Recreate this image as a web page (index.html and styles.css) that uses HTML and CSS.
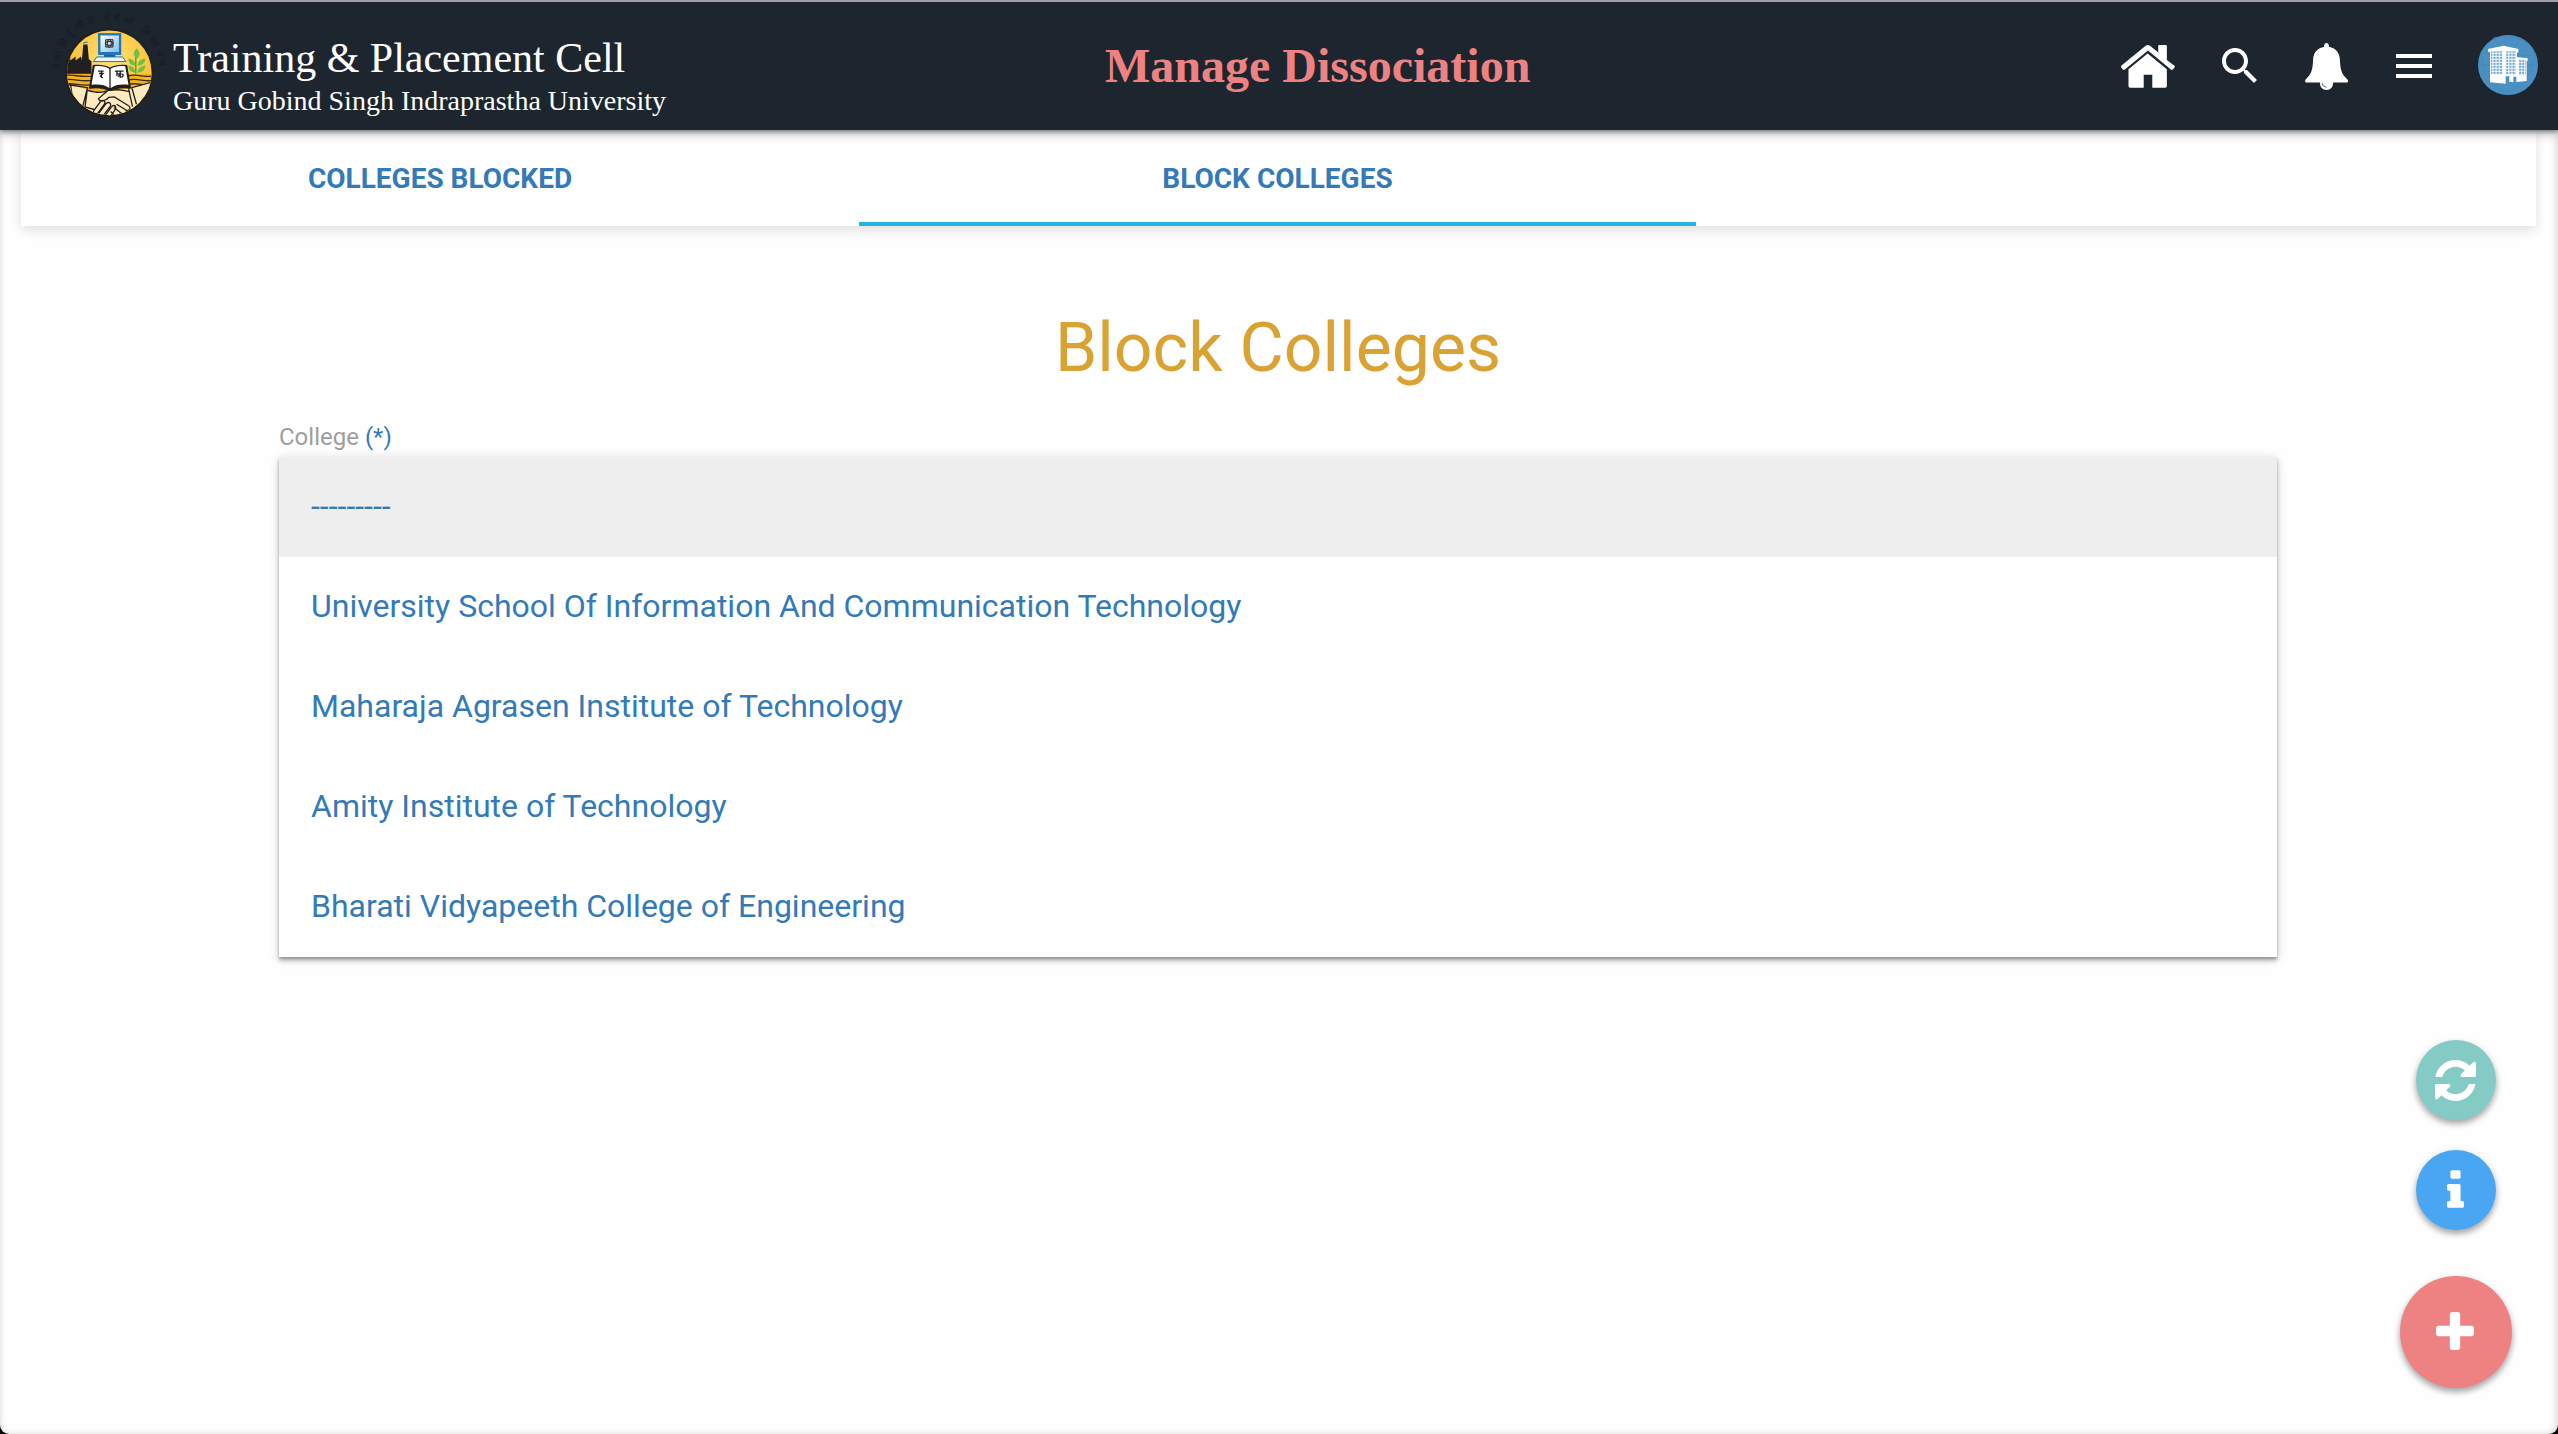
FILE: index.html
```html
<!DOCTYPE html>
<html lang="en">
<head>
<meta charset="utf-8">
<title>Manage Dissociation</title>
<link rel="stylesheet" href="styles.css">
</head>
<body>
<header class="navbar">
  <a class="brand">
    <svg class="brand-logo" viewBox="0 0 360 360" aria-hidden="true">
      <defs>
        <path id="motto-arc" d="M28 178A150 150 0 0 1 328 178"/>
        <clipPath id="seal"><circle cx="178" cy="187" r="128"/></clipPath>
        <radialGradient id="sun" cx="50%" cy="35%" r="60%">
          <stop offset="0" stop-color="#ffe27a"/>
          <stop offset="1" stop-color="#fbb924"/>
        </radialGradient>
        <linearGradient id="screen" x1="0" y1="0" x2="1" y2="1">
          <stop offset="0" stop-color="#fff"/>
          <stop offset="1" stop-color="#7cc0ea"/>
        </linearGradient>
      </defs>
      <text class="motto"><textPath href="#motto-arc" textLength="460">ज्योतिर्वृणीत तमसो विजानन</textPath></text>
      <circle cx="178" cy="187" r="135" fill="#231f20"/>
      <g clip-path="url(#seal)">
        <rect x="40" y="50" width="280" height="280" fill="url(#sun)"/>
        <path d="M40 150l20-12v12l16-12v12l16-12 3 10 4-47h13l4 45 8 6v42H40z" fill="#231f20"/>
        <path d="M100 98c2-5 8-2 12-4" fill="none" stroke="#2b8f9c" stroke-width="4"/>
        <rect x="40" y="190" width="280" height="60" fill="#f5b31f"/>
        <path d="M40 196c30-8 50 8 90 0M40 209c30-8 50 8 90 0M40 222c30-8 50 8 90 0M235 196c30-8 50 8 80 0M235 209c30-8 50 8 80 0M235 222c30-8 50 8 80 0" fill="none" stroke="#3c2c14" stroke-width="4"/>
        <path d="M258 190V135" stroke="#4a9c35" stroke-width="4"/>
        <path d="M261 113c-14 14-10 24 0 32 11-9 12-20 0-32zM257 166c-2-16-9-20-21-22 0 14 7 21 21 22zM263 166c2-16 11-20 24-22-1 14-9 21-24 22zM257 187c-2-16-9-20-21-22 0 14 7 21 21 22zM263 187c2-16 11-20 24-22-1 14-9 21-24 22z" fill="#72bf44"/>
        <path d="M40 218l55 14 40 14 40-4 42-2 105-30v130H40z" fill="#fdeabf"/>
        <path d="M48 222l64 10-14 55M60 218l8 55M112 232l-8 62M318 212l-72 20 14 50M236 234l12 55" fill="none" stroke="#231f20" stroke-width="4"/>
        <path d="M112 240c30 8 45 8 63 0l30-2 35 6M175 240l-30 25c4 12 22 8 32-4l16-1 42 26c12 8 2 20-9 12l-26-16M228 300c6 10-6 18-16 8l-20-16M210 310c2 10-8 14-16 6l-12-12M104 290l28 8M132 300l20-27c10-6 16 2 10 10l-19 26c-10 6-16-2-11-9M146 310l23-31c10-6 16 2 11 10l-20 27M166 316l20-28c10-6 14 4 9 11l-16 24" fill="none" stroke="#231f20" stroke-width="4"/>
      </g>
      <path d="M144 67h70v66h-70z" fill="#2274ba"/>
      <path d="M151 74h56v50h-56z" fill="url(#screen)"/>
      <g fill="none" stroke="#231f20" stroke-width="3"><ellipse cx="178" cy="98" rx="12" ry="6"/><ellipse cx="178" cy="98" rx="6" ry="12"/><path d="M167 87h22v22h-22z"/></g>
      <path d="M162 133h34v8h-34z" fill="#1b5f9e"/>
      <path d="M140 139h78l10 14h-98z" fill="#eaf5fc" stroke="#2274ba" stroke-width="3"/>
      <path d="M128 163l-12 72c30-4 45 0 64 8 19-8 34-12 64-8l-12-72c-22-2-38 0-52 8-14-8-30-10-52-8z" fill="#231f20"/>
      <path d="M134 167l-10 56c26-2 40 0 54 10V175c-12-8-26-10-44-8zM226 167l10 56c-26-2-40 0-54 10V175c12-8 26-10 44-8z" fill="#fff"/>
      <path d="M144 182h17M154 182v20M147 189h12l-8 8 7 6M195 182h26M201 183v14M211 183v20M202 191c9-4 8 7 2 7M214 190c9 0 6 12 0 8" fill="none" stroke="#231f20" stroke-width="4"/>
    </svg>
    <span class="brand-text">
      <span class="brand-name">Training &amp; Placement Cell</span>
      <span class="brand-org">Guru Gobind Singh Indraprastha University</span>
    </span>
  </a>
  <h1 class="page-name">Manage Dissociation</h1>
  <nav class="nav-icons">
    <svg class="icon-home" viewBox="93 135 162 130"><path d="M167 137q7-4 13 0l25 21v-20q0-3 3-3h20q3 0 3 3v42l23 18q2 2 0 5l-5 6q-3 3-6 0l-69-57-70 57q-3 3-6 0l-5-6q-2-3 0-5z"/><path d="M173 161l58 47v51q0 5-5 5h-39v-39h-26v39h-41q-5 0-5-5v-51z"/></svg>
    <svg class="icon-md" viewBox="0 0 24 24"><path d="M15.5 14h-.79l-.28-.27C15.41 12.59 16 11.11 16 9.5 16 5.91 13.09 3 9.500 3S3 5.910 3 9.500 5.910 16 9.500 16c1.610 0 3.090-.59 4.230-1.570l.27.28v.79l5 4.990L20.490 19l-4.990-5zm-6 0C7.010 14 5 11.990 5 9.500S7.010 5 9.500 5 14 7.010 14 9.500 11.990 14 9.500 14z"/></svg>
    <svg class="icon-bell" viewBox="647 127 128 140"><path d="M704 138v-4q1-7 7-7t7 7v4c20 4 32 16 33 40 1 32 7 44 21 56q6 6 1 11h-42q-1 22-20 22t-20-22h-42q-4-5 1-11c14-12 20-24 21-56 1-24 13-36 34-40z"/><path class="bell-glint" d="M697 246q2 12 14 13"/></svg>
    <svg class="icon-md icon-menu" viewBox="0 0 24 24"><path d="M3 18h18v-2H3v2zm0-5h18v-2H3v2zm0-7v2h18V6H3z"/></svg>
    <svg class="avatar" viewBox="1 11 180 180">
      <defs><pattern id="panes" width="9.500" height="9" patternUnits="userSpaceOnUse" x="37" y="58"><path d="M1 1h6.500v5H1z" fill="#4a90c2"/></pattern></defs>
      <circle cx="91" cy="101" r="90" fill="#4a90c2"/>
      <path d="M10 62L50 18l80 2 44 50-30 85-60 30-60-40zM50 18l34 60 46-58M10 62l74 16 90-8M24 145l60-67 60 77M1 101h180" fill="none" stroke="#4386b8" stroke-width="2"/>
      <path d="M31 53l47-10 44 10v10l-4 1v13l32 4v7l-3 1v60l-31 3v-16h-9v17l-4-1v-17H84v22l-47-4V62l-5 1z" fill="#fff"/>
      <path d="M40 60h34v69H40zM83 60h32v69H83zM123 86h22v46h-22z" fill="url(#panes)"/>
      <path d="M95 135h8v17l-8-1z" fill="#fff"/>
    </svg>
  </nav>
</header>

<main class="content">
  <ul class="tabs">
    <li class="tab">Colleges Blocked</li>
    <li class="tab tab-active">Block Colleges</li>
  </ul>

  <section class="panel">
    <h2 class="panel-title">Block Colleges</h2>
    <label class="field-label">College <span class="required">(*)</span></label>
    <ul class="dropdown">
      <li class="option option-selected">---------</li>
      <li class="option">University School Of Information And Communication Technology</li>
      <li class="option">Maharaja Agrasen Institute of Technology</li>
      <li class="option">Amity Institute of Technology</li>
      <li class="option">Bharati Vidyapeeth College of Engineering</li>
    </ul>
  </section>
</main>

<div class="actions">
  <button class="fab fab-refresh" aria-label="Refresh"><svg width="41" height="41" viewBox="0 0 1536 1536"><path d="M1511 928q0 5-1 7-64 268-268 434.500t-478 166.500q-146 0-282.500-55t-243.500-157l-129 129q-19 19-45 19t-45-19-19-45v-448q0-26 19-45t45-19h448q26 0 45 19t19 45-19 45l-137 137q71 66 161 102t187 36q134 0 250-65t186-179q11-17 53-117 8-23 30-23h192q13 0 22.500 9.500t9.500 22.500zm25-800v448q0 26-19 45t-45 19h-448q-26 0-45-19t-19-45 19-45l138-138q-148-137-349-137-134 0-250 65t-186 179q-11 17-53 117-8 23-30 23h-199q-13 0-22.500-9.500t-9.500-22.500v-7q65-268 270-434.500t480-166.500q146 0 284 55.500t245 156.500l130-129q19-19 45-19t45 19 19 45z"/></svg></button>
  <button class="fab fab-info" aria-label="Info"><svg width="17" height="38" viewBox="0 128 640 1408"><path d="M640 1344v128q0 26-19 45t-45 19h-512q-26 0-45-19t-19-45v-128q0-26 19-45t45-19h64v-384h-64q-26 0-45-19t-19-45v-128q0-26 19-45t45-19h384q26 0 45 19t19 45v576h64q26 0 45 19t19 45zm-128-1152v192q0 26-19 45t-45 19h-256q-26 0-45-19t-19-45v-192q0-26 19-45t45-19h256q26 0 45 19t19 45z"/></svg></button>
  <button class="fab fab-add" aria-label="Add"><svg width="38" height="38" viewBox="0 0 1408 1408"><path d="M1408 608v192q0 40-28 68t-68 28h-416v416q0 40-28 68t-68 28h-192q-40 0-68-28t-28-68v-416h-416q-40 0-68-28t-28-68v-192q0-40 28-68t68-28h416v-416q0-40 28-68t68-28h192q40 0 68 28t28 68v416h416q40 0 68 28t28 68z"/></svg></button>
</div>
</body>
</html>
```
FILE: styles.css
```css
* { box-sizing: border-box; }

html { background: #000; }

body {
  margin: 0;
  height: 1434px;
  overflow: hidden;
  display: flex;
  flex-direction: column;
  background: #fefefe;
  border-radius: 0 0 9px 9px;
  box-shadow: inset 3px 0 6px -3px rgba(0, 0, 0, .14), inset -3px 0 8px -2px rgba(0, 0, 0, .18);
  font-family: Roboto, sans-serif;
  color: #337ab7;
}

ul { margin: 0; padding: 0; list-style: none; }
h1, h2 { margin: 0; }
svg { display: block; }

/* Top bar */
.navbar {
  position: relative;
  z-index: 1;
  flex: none;
  height: 130px;
  border-top: 2px solid #a19ea4;
  background: #1d262f;
  box-shadow: 0 4px 10px rgba(0, 0, 0, .26), 0 2px 4px rgba(0, 0, 0, .36);
  display: grid;
  grid-template-columns: 1105px 1fr auto;
  align-items: center;
  padding-right: 20px;
  font-family: "Liberation Serif", serif;
}

.brand {
  display: flex;
  align-self: start;
  padding: 9px 0 0 50px;
  color: #fff;
}
.brand-logo { width: 120px; height: 119px; overflow: visible; }
.brand-text {
  display: flex;
  flex-direction: column;
  padding: 23px 0 0 3px;
  white-space: nowrap;
}
.brand-name { font-size: 42px; line-height: 48px; }
.brand-org { font-size: 28px; line-height: 37px; }
.motto {
  font: 32px "Noto Sans Devanagari", "Noto Sans", sans-serif;
  fill: #171a20;
}

.page-name {
  font-size: 48px;
  line-height: 56px;
  font-weight: 700;
  color: #ee8283;
  white-space: nowrap;
}

.nav-icons { display: flex; align-items: center; gap: 41px; fill: #fff; }
.icon-home { width: 54px; height: 43px; }
.icon-md { width: 48px; height: 48px; }
.icon-menu { margin: 0 -1px 0 1px; }
.icon-bell { width: 43px; height: 47px; }
.bell-glint { fill: none; stroke: #1d262f; stroke-width: 2; }
.avatar { width: 60px; height: 60px; margin-bottom: 3px; }

/* Tabs */
.content { padding: 0 22px 0 21px; }
.tabs {
  display: grid;
  grid-template-columns: 838px 837px 1fr;
  height: 96px;
  background: #fff;
  box-shadow: 0 4px 10px rgba(0, 0, 0, .09), 0 4px 16px rgba(0, 0, 0, .04);
}
.tab {
  font-size: 28px;
  line-height: 97px;
  height: 96px;
  font-weight: 700;
  text-align: center;
  text-transform: uppercase;
}
.tab-active { box-shadow: inset 0 -4px #26b3dd; }

/* College picker */
.panel {
  width: 1998px;
  margin: 85px 0 0 258px;
}
.panel-title {
  font-size: 68px;
  line-height: 75px;
  font-weight: 400;
  text-align: center;
  color: #d9a334;
}
.field-label {
  display: block;
  margin-top: 33px;
  font-size: 24px;
  line-height: 36px;
  color: #9e9e9e;
}
.required { color: #337ab7; }
.dropdown {
  margin-top: 2px;
  background: #fff;
  box-shadow: 0 4px 4px rgba(0, 0, 0, .2), 0 2px 10px rgba(0, 0, 0, .16), 0 2px 2px rgba(0, 0, 0, .18);
}
.option {
  height: 100px;
  padding: 0 32px;
  font-size: 32px;
  line-height: 98px;
}
.option-selected { background: #eee; }

/* Floating actions */
.actions {
  position: fixed;
  right: 46px;
  bottom: 46px;
  display: flex;
  flex-direction: column;
  align-items: center;
}
.fab {
  display: flex;
  align-items: center;
  justify-content: center;
  width: 80px;
  height: 80px;
  margin: 0;
  padding: 0;
  border: 0;
  border-radius: 50%;
  fill: #fff;
  box-shadow: 0 4px 6px rgba(0, 0, 0, .3), 0 2px 10px rgba(0, 0, 0, .1);
}
.fab-refresh { background: #85cbc5; margin-bottom: 30px; }
.fab-refresh svg { margin-right: 2px; }
.fab-info { background: #48a6f3; margin-bottom: 46px; }
.fab-info svg { margin: 0 1px 2px 0; }
.fab-add { width: 112px; height: 112px; background: #ee8283; }
.fab-add svg { margin: 0 2px 2px 0; }
```
